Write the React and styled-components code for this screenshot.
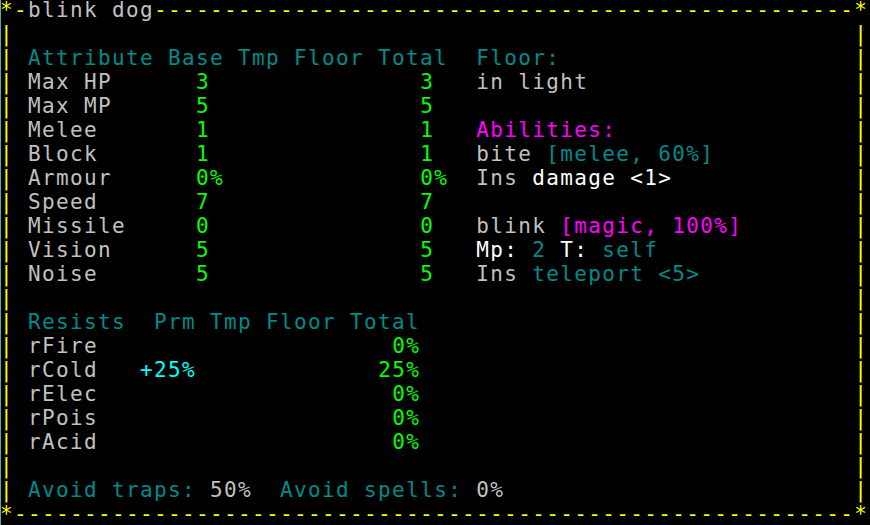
import React from "react";
import styled, { createGlobalStyle } from "styled-components";

const COLS = 62;

const Global = createGlobalStyle`
  html, body {
    margin: 0;
    padding: 0;
    background: #000;
    overflow: hidden;
  }
`;

const Screen = styled.div`
  width: 870px;
  height: 525px;
  background: #000;
  overflow: hidden;
  box-shadow: inset 1px 0 0 #5fa8a8;
`;

const Grid = styled.div`
  font-family: "DejaVu Sans Mono", "Liberation Mono", monospace;
  font-size: 21px;
  letter-spacing: 1.36px;
  color: #c0c0c0;
`;

const Line = styled.div`
  height: 24px;
  line-height: 20px;
  white-space: pre;
`;

const COLORS = {
  grey: "#c0c0c0",
  teal: "#008a8a",
  green: "#00ff00",
  magenta: "#ff00ff",
  cyan: "#00ffff",
  white: "#ffffff",
  yellow: "#ffff00",
};

const Seg = styled.span`
  color: ${(p) => COLORS[p.$c] || COLORS.grey};
`;

const g = "grey", t = "teal", gr = "green", m = "magenta", c = "cyan", w = "white";

const content = [
  [],
  [[2, "Attribute Base Tmp Floor Total", t], [34, "Floor:", t]],
  [[2, "Max HP", g], [14, "3", gr], [30, "3", gr], [34, "in light", g]],
  [[2, "Max MP", g], [14, "5", gr], [30, "5", gr]],
  [[2, "Melee", g], [14, "1", gr], [30, "1", gr], [34, "Abilities:", m]],
  [[2, "Block", g], [14, "1", gr], [30, "1", gr], [34, "bite ", g], [39, "[melee, 60%]", t]],
  [[2, "Armour", g], [14, "0%", gr], [30, "0%", gr], [34, "Ins ", g], [38, "damage <1>", w]],
  [[2, "Speed", g], [14, "7", gr], [30, "7", gr]],
  [[2, "Missile", g], [14, "0", gr], [30, "0", gr], [34, "blink ", g], [40, "[magic, 100%]", m]],
  [[2, "Vision", g], [14, "5", gr], [30, "5", gr], [34, "Mp: ", w], [38, "2", t], [39, " T: ", w], [43, "self", t]],
  [[2, "Noise", g], [14, "5", gr], [30, "5", gr], [34, "Ins ", g], [38, "teleport <5>", t]],
  [],
  [[2, "Resists  Prm Tmp Floor Total", t]],
  [[2, "rFire", g], [28, "0%", gr]],
  [[2, "rCold", g], [10, "+25%", c], [27, "25%", gr]],
  [[2, "rElec", g], [28, "0%", gr]],
  [[2, "rPois", g], [28, "0%", gr]],
  [[2, "rAcid", g], [28, "0%", gr]],
  [],
  [[2, "Avoid traps: ", t], [15, "50%", g], [18, "  Avoid spells: ", t], [34, "0%", g]],
];

function buildRow(placements) {
  const segs = [{ text: "|", color: "yellow" }];
  let col = 1;
  for (const [start, text, color] of placements) {
    if (start > col) segs.push({ text: " ".repeat(start - col), color: "grey" });
    segs.push({ text, color });
    col = start + text.length;
  }
  if (col < COLS - 1) segs.push({ text: " ".repeat(COLS - 1 - col), color: "grey" });
  segs.push({ text: "|", color: "yellow" });
  return segs;
}

function borderRow(title) {
  const segs = [{ text: "*", color: "yellow" }];
  let col = 1;
  if (title) {
    segs.push({ text: "-", color: "yellow" });
    segs.push({ text: title, color: "grey" });
    col = 2 + title.length;
  }
  segs.push({ text: "-".repeat(COLS - 1 - col), color: "yellow" });
  segs.push({ text: "*", color: "yellow" });
  return segs;
}

const rows = [borderRow("blink dog"), ...content.map(buildRow), borderRow(null)];

export default function App() {
  return (
    <>
      <Global />
      <Screen>
        <Grid>
          {rows.map((segs, i) => (
            <Line key={i}>
              {segs.map((s, j) => (
                <Seg key={j} $c={s.color}>
                  {s.text}
                </Seg>
              ))}
            </Line>
          ))}
        </Grid>
      </Screen>
    </>
  );
}
